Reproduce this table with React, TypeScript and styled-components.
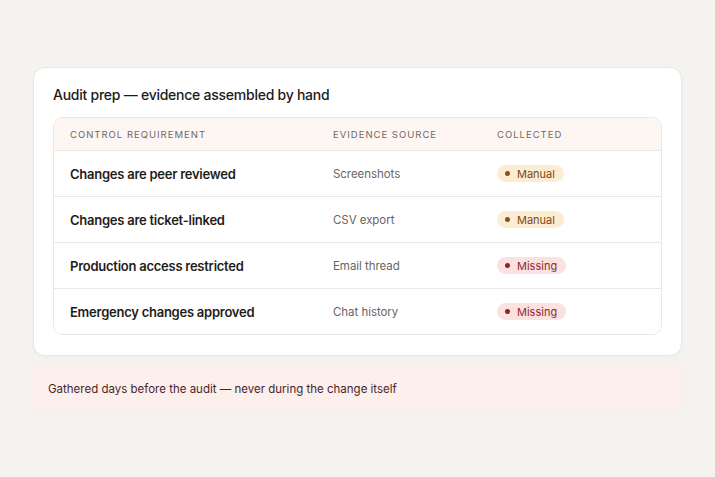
import styled, { createGlobalStyle } from "styled-components";

const GlobalStyle = createGlobalStyle`
    html, body {
        margin: 0;
        padding: 0;
        background: #f5f3f0;
        font-family: Inter, "Noto Sans", "Liberation Sans", sans-serif;
    }
`;

const Page = styled.div`
    width: 715px;
    height: 477px;
    box-sizing: border-box;
    padding: 67px 33px 0;
    display: flex;
    justify-content: center;
`;

const Stack = styled.div`
    width: 649px;
    display: flex;
    flex-direction: column;
    gap: 10px;
`;

const Card = styled.section`
    background: #ffffff;
    border: 1px solid #ebe8e4;
    border-radius: 12px;
    box-shadow: 0 1px 3px rgba(60, 40, 20, 0.04);
    padding: 17px 19px 20px 19px;
    display: flex;
    flex-direction: column;
    gap: 12px;
`;

const Title = styled.h2`
    margin: 0;
    font-size: 14px;
    line-height: 20px;
    font-weight: 500;
    color: #1d1b19;
    letter-spacing: -0.25px;
`;

const Table = styled.div`
    border: 1px solid #ebe7e3;
    border-radius: 10px;
    overflow: hidden;
`;

const Row = styled.div<{ $head?: boolean }>`
    display: grid;
    grid-template-columns: 263px 164px 1fr;
    align-items: center;
    height: ${(p) => (p.$head ? "32px" : "45px")};
    padding-left: 16px;
    background: ${(p) => (p.$head ? "#fdf6f3" : "#ffffff")};
    & + & {
        border-top: 1px solid #ece9e5;
    }
`;

const HeadCell = styled.div`
    font-size: 9.5px;
    letter-spacing: 1px;
    text-transform: uppercase;
    color: #6e6964;
`;

const Requirement = styled.div`
    font-size: 13px;
    font-weight: 600;
    color: #1f1d1a;
    letter-spacing: -0.25px;
`;

const Source = styled.div`
    font-size: 11.5px;
    color: #6a655f;
    letter-spacing: -0.05px;
`;

const tones = {
    manual: { bg: "#fcecd2", fg: "#7a4a18", dot: "#8a4f1c" },
    missing: { bg: "#fbe2e0", fg: "#8e2b2e", dot: "#8e2229" },
};

const Badge = styled.span<{ $tone: keyof typeof tones }>`
    justify-self: start;
    display: inline-flex;
    align-items: center;
    gap: 7px;
    height: 17px;
    padding: 0 9px 0 8px;
    border-radius: 9px;
    font-size: 11px;
    background: ${(p) => tones[p.$tone].bg};
    color: ${(p) => tones[p.$tone].fg};
    &::before {
        content: "";
        width: 5px;
        height: 5px;
        border-radius: 50%;
        background: ${(p) => tones[p.$tone].dot};
    }
`;

const Note = styled.div`
    height: 43px;
    display: flex;
    align-items: center;
    padding: 1px 15px 0;
    border-radius: 8px;
    background: #fcefec;
    box-shadow: 0 0 6px 2px rgba(252, 236, 232, 0.8);
    font-size: 11.5px;
    color: #4b1f2c;
`;

const rows: { req: string; src: string; status: "manual" | "missing" }[] = [
    { req: "Changes are peer reviewed", src: "Screenshots", status: "manual" },
    { req: "Changes are ticket-linked", src: "CSV export", status: "manual" },
    { req: "Production access restricted", src: "Email thread", status: "missing" },
    { req: "Emergency changes approved", src: "Chat history", status: "missing" },
];

const App = () => {
    return (
        <Page>
            <GlobalStyle />
            <Stack>
                <Card>
                    <Title>Audit prep — evidence assembled by hand</Title>
                    <Table>
                        <Row $head>
                            <HeadCell>Control requirement</HeadCell>
                            <HeadCell>Evidence source</HeadCell>
                            <HeadCell>Collected</HeadCell>
                        </Row>
                        {rows.map((r) => (
                            <Row key={r.req}>
                                <Requirement>{r.req}</Requirement>
                                <Source>{r.src}</Source>
                                <Badge $tone={r.status}>
                                    {r.status === "manual" ? "Manual" : "Missing"}
                                </Badge>
                            </Row>
                        ))}
                    </Table>
                </Card>
                <Note>Gathered days before the audit — never during the change itself</Note>
            </Stack>
        </Page>
    );
};

export default App;
